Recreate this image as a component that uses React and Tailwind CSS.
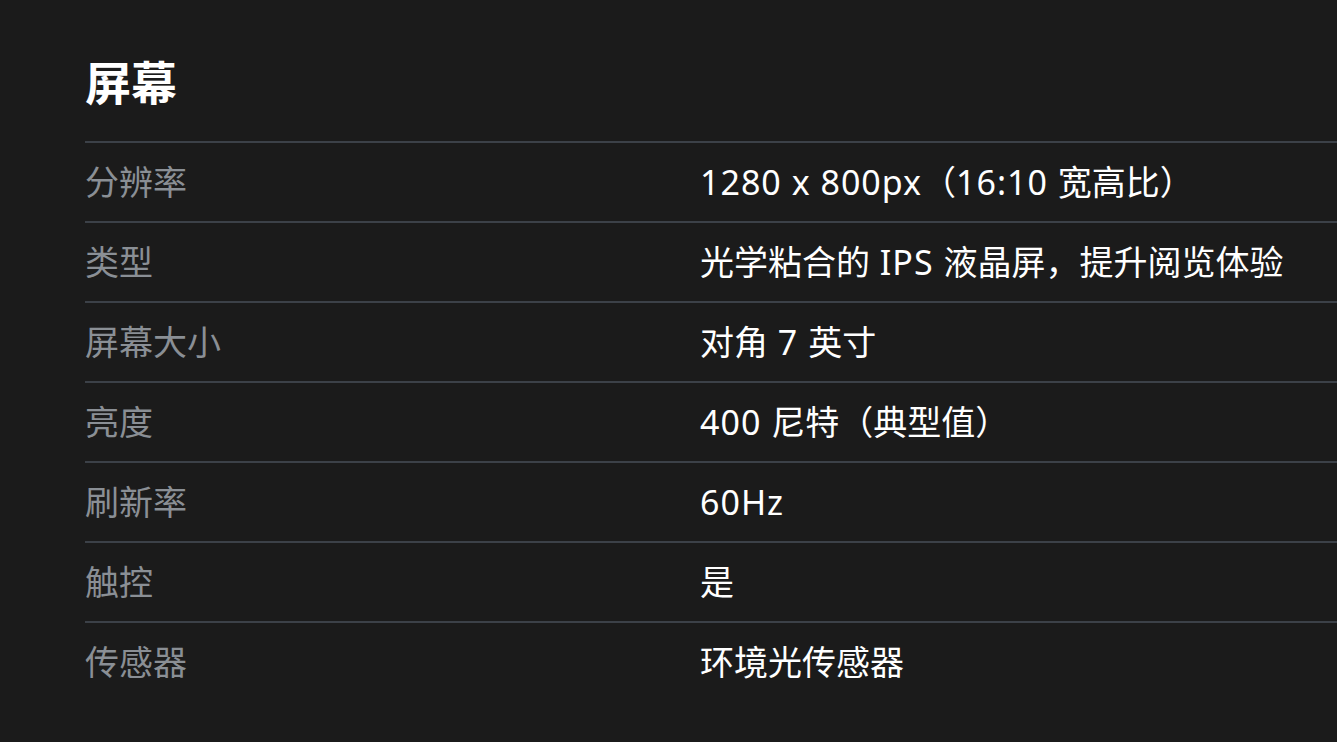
export default function App() {
  const rows = [
    ["分辨率", "1280 x 800px（16:10 宽高比）"],
    ["类型", "光学粘合的 IPS 液晶屏，提升阅览体验"],
    ["屏幕大小", "对角 7 英寸"],
    ["亮度", "400 尼特（典型值）"],
    ["刷新率", "60Hz"],
    ["触控", "是"],
    ["传感器", "环境光传感器"],
  ];
  const renderValue = (v) =>
    v.split(/([\x20-\x7E]+)/).filter(Boolean).map((part, i) =>
      /^[\x20-\x7E]+$/.test(part) ? (
        <span key={i} className="tracking-[1px]">{part}</span>
      ) : (
        <span key={i}>{part}</span>
      )
    );
  return (
    <div
      className="w-[1337px] h-[742px] bg-[#1b1b1b] pl-[85px] overflow-hidden"
      style={{ fontFamily: '"Noto Sans", "Noto Sans CJK SC", sans-serif' }}
    >
      <div className="h-[141px] pt-[22px] flex items-center">
        <h1 className="text-[46px] font-bold text-white leading-none">屏幕</h1>
      </div>
      {rows.map(([k, v]) => (
        <div key={k} className="flex items-center h-[80px] border-t-2 border-[#3c4148]">
          <div className="w-[615px] text-[34px] text-[#8a8f95] leading-none">{k}</div>
          <div className="text-[34px] text-white leading-none">{renderValue(v)}</div>
        </div>
      ))}
    </div>
  );
}
